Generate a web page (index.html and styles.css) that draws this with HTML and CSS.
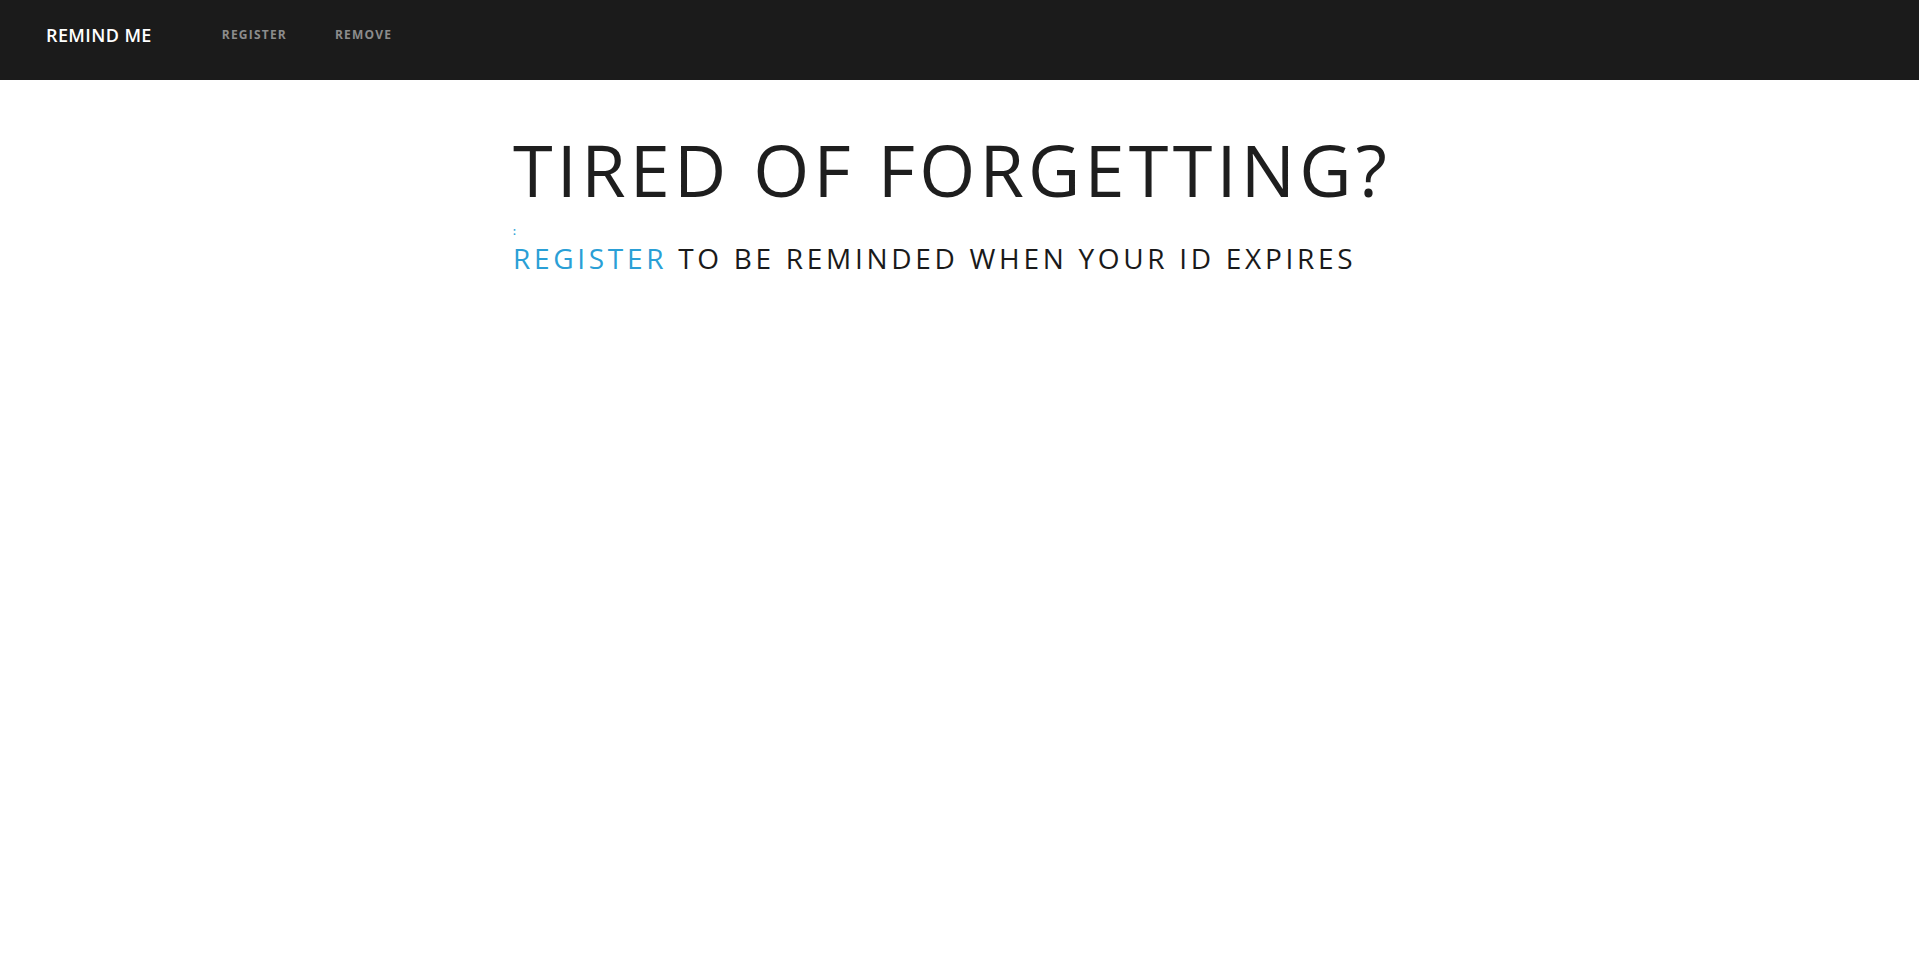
FILE: index.html
```html
<!DOCTYPE html>
<html lang="en">
<head>
<meta charset="utf-8">
<title>Remind Me</title>
<link rel="stylesheet" href="styles.css">
</head>
<body>
<nav class="navbar">
  <a class="brand" href="#">REMIND ME</a>
  <ul class="nav-links">
    <li><a href="#">REGISTER</a></li>
    <li><a href="#">REMOVE</a></li>
  </ul>
</nav>
<main class="content">
  <h1 class="title">TIRED OF FORGETTING?</h1>
  <div class="tiny">:</div>
  <h2 class="subtitle"><a href="#" class="sub-link">REGISTER</a> TO BE REMINDED WHEN YOUR ID EXPIRES</h2>
</main>
</body>
</html>
```
FILE: styles.css
```css
html, body {
  margin: 0;
  padding: 0;
  background: #ffffff;
  font-family: "Open Sans", "Noto Sans", sans-serif;
}
a { text-decoration: none; }
.navbar {
  height: 80px;
  background: #1b1b1b;
  display: flex;
  align-items: flex-start;
  padding-left: 46px;
}
.brand {
  color: #ffffff;
  font-size: 18px;
  font-weight: 600;
  line-height: 18px;
  margin-top: 26px;
  letter-spacing: 0.4px;
}
.nav-links {
  list-style: none;
  display: flex;
  margin: 0;
  padding: 0;
  margin-left: 70px;
  gap: 48px;
}
.nav-links a {
  display: block;
  color: #8c8c8c;
  font-size: 12px;
  font-weight: 700;
  letter-spacing: 1.2px;
  line-height: 14px;
  margin-top: 28px;
}
.content {
  width: 893px;
  margin: 0 auto;
  padding-top: 44px;
}
.title {
  margin: 0;
  font-weight: 400;
  font-size: 72px;
  line-height: 90px;
  color: #1e1e1e;
  letter-spacing: 4.2px;
  white-space: nowrap;
}
.tiny {
  color: #2a9fd6;
  font-size: 10px;
  font-weight: 700;
  line-height: 10px;
  margin-top: 12px;
}
.subtitle {
  margin: 5px 0 0;
  font-weight: 400;
  font-size: 28px;
  line-height: 34px;
  color: #1a1a1a;
  letter-spacing: 3.7px;
  white-space: nowrap;
}
.sub-link { color: #2a9fd6; }
```
